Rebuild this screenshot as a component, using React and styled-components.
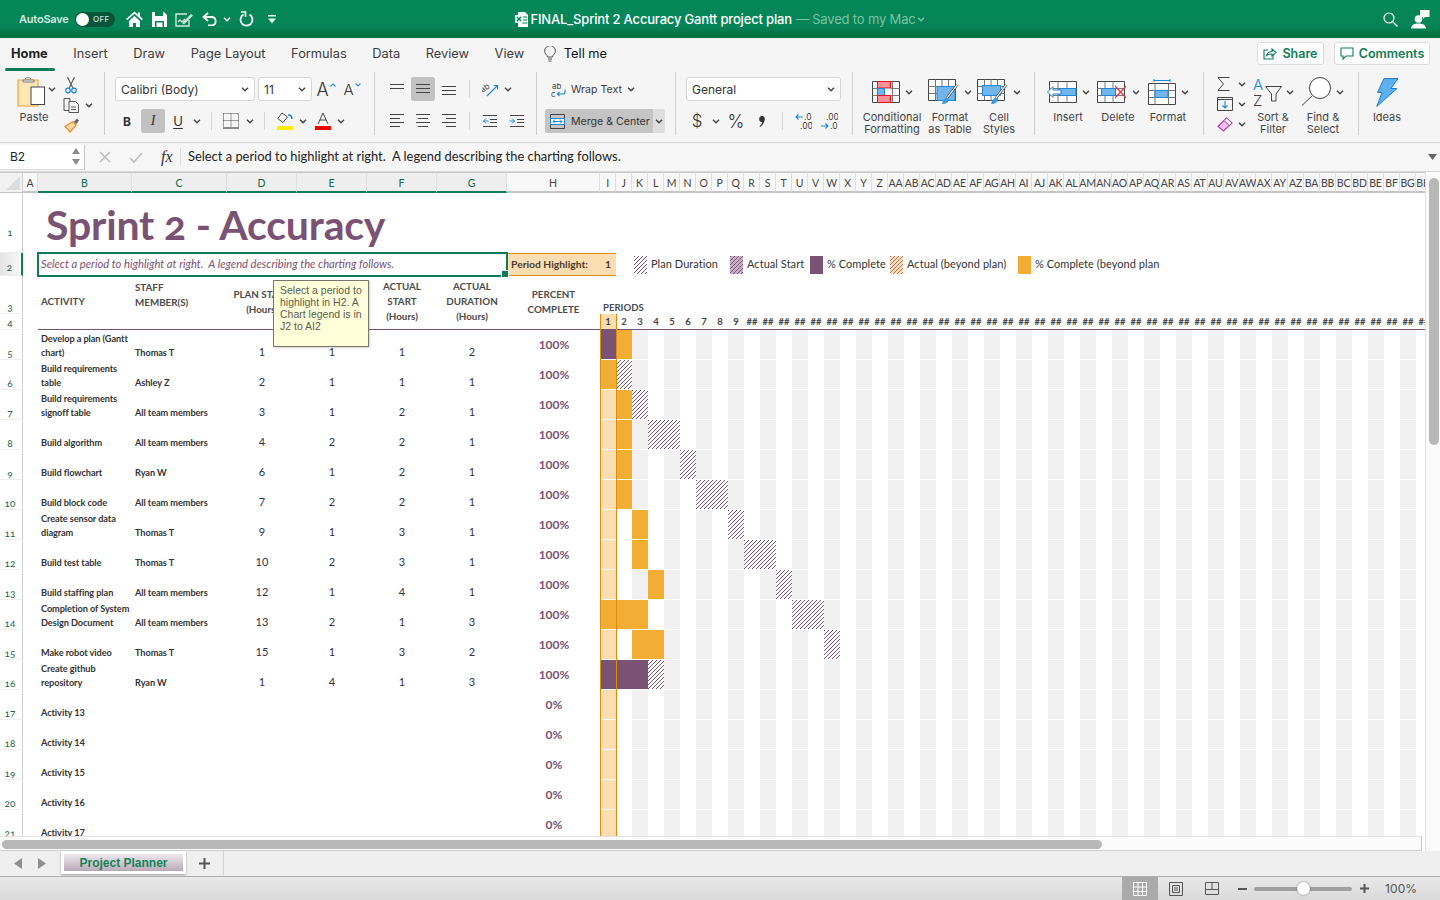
import React from "react";
import styled, { createGlobalStyle, css } from "styled-components";

const PURPLE = "#7a5273";
const ORANGE = "#f1ad34";
const LIGHT = "#fbddb2";
const LINE = "#df8e0b";
const GREEN = "#107c55";
const UI = `Inter, "Liberation Sans", sans-serif`;
const CELL = `Lato, "Open Sans", sans-serif`;

const Global = createGlobalStyle`
  html, body { margin: 0; padding: 0; width: 1440px; height: 900px; overflow: hidden; background: #fff; }
  * { box-sizing: border-box; }
  svg { display: block; flex: none; }
`;

const Page = styled.div`width:1440px;height:900px;display:flex;flex-direction:column;font-family:${UI};overflow:hidden;`;

/* ---------- title bar ---------- */
const TitleBar = styled.header`
  height:38px;flex:none;display:grid;grid-template-columns:1fr auto 1fr;align-items:center;
  background:linear-gradient(#05885a 0%,#058457 70%,#036d3c 100%);color:#fff;
`;
const QuickBar = styled.div`display:flex;align-items:center;padding-left:19px;`;
const AutoSave = styled.span`font-size:11px;font-weight:600;color:#d5ebe0;width:56px;letter-spacing:-.2px;`;
const Toggle = styled.div`
  width:40px;height:15px;border-radius:8px;background:#06553a;display:flex;align-items:center;
  font-size:8px;font-weight:500;color:#cfe6da;gap:4px;letter-spacing:.3px;margin-right:11px;
  &::before{content:"";width:13px;height:13px;border-radius:50%;background:#fff;margin-left:1px;}
`;
const QuickIcon = styled.span`display:flex;align-items:center;justify-content:center;width:${p=>p.$w}px;margin-left:${p=>p.$ml||0}px;`;
const DocTitle = styled.div`display:flex;align-items:center;font-size:13px;font-weight:500;letter-spacing:-.17px;white-space:nowrap;`;
const Saved = styled.span`color:#7dc2a1;margin-left:4px;font-weight:400;`;
const TitleRight = styled.div`display:flex;justify-content:flex-end;align-items:center;gap:13px;padding-right:10px;`;

/* ---------- tabs ---------- */
const TabBar = styled.nav`height:32px;flex:none;background:#f5f5f5;display:flex;align-items:center;padding:0 10px 1px 11px;font-size:12.8px;color:#333;gap:25.6px;`;
const Tab = styled.span`
  position:relative;font-weight:${p=>p.$on?700:400};color:${p=>p.$on?"#222":"#3c3c3c"};
  ${p=>p.$on&&css`&::after{content:"";position:absolute;left:-6px;right:-7px;bottom:-10px;height:3px;background:${GREEN};border-radius:2px;}`}
`;
const TellMe = styled.span`display:flex;align-items:center;gap:8px;color:#111;font-weight:400;margin-left:-6px;`;
const TabSpacer = styled.div`flex:1;`;
const Action = styled.button`
  height:23px;width:${p=>p.$w}px;background:#fff;border:1px solid #dcdcdc;border-radius:3px;color:${GREEN};
  font:600 12.5px ${UI};display:flex;align-items:center;justify-content:center;gap:5px;padding:0;margin-left:${p=>p.$ml||0}px;
`;

/* ---------- ribbon ---------- */
const Ribbon = styled.section`height:73px;flex:none;background:#f5f5f5;border-bottom:1px solid #d4d4d4;display:flex;padding-top:2px;`;
const Group = styled.div`
  width:${p=>p.$w}px;height:63px;flex:none;padding:5px 0 0 ${p=>p.$pl||0}px;
  border-right:${p=>p.$last?"none":"1px solid #cfcfcf"};display:${p=>p.$flex?"flex":"block"};
`;
const ToolRow = styled.div`display:flex;align-items:center;height:24px;margin-bottom:8px;`;
const Tool = styled.span`
  width:${p=>p.$w||24}px;height:24px;margin-left:${p=>p.$ml||0}px;display:flex;align-items:center;justify-content:center;flex:none;
  border-radius:3px;background:${p=>p.$on?"#c1c1c1":"transparent"};color:#333;font-size:${p=>p.$fs||13}px;font-weight:${p=>p.$fw||400};
`;
const Sep = styled.i`display:block;width:1px;height:18px;background:#d6d6d6;margin-left:${p=>p.$ml||0}px;flex:none;`;
const Select = styled.div`
  width:${p=>p.$w}px;height:24px;background:#fff;border:1px solid #d6d6d6;border-radius:3px;margin-left:${p=>p.$ml||0}px;
  display:flex;align-items:center;justify-content:space-between;padding:0 5px;font-size:12px;color:#333;flex:none;
`;
const Bold = styled.b`font:700 12px ${UI};color:#333;`;
const Ital = styled.i`font:italic 14px "Liberation Serif",serif;color:#333;`;
const Under = styled.u`font:400 13px ${UI};color:#333;text-underline-offset:2px;`;
const Grow = styled.span`font:300 ${p=>p.$fs}px ${UI};color:#333;`;
const PasteCol = styled.div`width:${p=>p.$w}px;flex:none;display:flex;flex-direction:column;align-items:center;margin-top:-3px;`;
const PasteArrow = styled.span`width:10px;height:24px;flex:none;margin-left:-6px;display:flex;align-items:center;justify-content:center;`;
const SmallLabel = styled.span`font-size:11px;line-height:12px;color:#444;text-align:center;white-space:pre-line;`;
const WrapRow = styled.div`display:flex;align-items:center;gap:5px;font-size:10.6px;color:#3c3c3c;height:24px;padding-left:${p=>p.$pl||0}px;margin-bottom:8px;`;
const Merge = styled.div`width:120px;height:24px;margin-left:8px;display:flex;border-radius:3px;overflow:hidden;background:#dedede;`;
const MergeMain = styled.div`width:108px;background:#c4c4c4;display:flex;align-items:center;gap:6px;padding-left:5px;font-size:10.6px;color:#333;white-space:nowrap;`;
const MergeArrow = styled.div`flex:1;display:flex;align-items:center;justify-content:center;`;
const BigTool = styled.div`width:${p=>p.$w}px;flex:none;height:58px;display:flex;flex-direction:column;align-items:center;margin-top:-3px;`;
const BigIconRow = styled.div`height:36px;flex:none;display:flex;align-items:center;gap:${p=>p.$gap||5}px;margin-bottom:1px;`;
const EditStack = styled.div`width:${p=>p.$w||44}px;flex:none;padding:0 ${p=>p.$pr||0}px 0 ${p=>p.$pl??13}px;margin-top:${p=>p.$mt??-3}px;display:flex;flex-direction:column;`;
const EditRow = styled.div`height:22px;display:flex;align-items:center;justify-content:space-between;`;
const ClipRow = styled.div`height:22px;display:flex;align-items:center;gap:5px;padding-left:${p=>p.$pl||0}px;`;

/* ---------- formula ---------- */
const FormulaBar = styled.section`height:29px;flex:none;background:#f6f6f6;display:flex;align-items:center;border-bottom:1px solid #d8d8d8;`;
const NameBox = styled.div`width:85px;height:25px;background:#fff;border-right:1px solid #c8c8c8;border-bottom:1px solid #dcdcdc;display:flex;align-items:center;justify-content:space-between;padding:0 4px 0 10px;font-size:12px;color:#222;`;
const FxIcons = styled.div`width:86px;flex:none;display:flex;align-items:center;gap:18px;padding-left:14px;color:#bdbdbd;`;
const FxMark = styled.i`font:italic 16px "Liberation Serif",serif;color:#333;padding-right:7px;border-right:1px solid #ddd;flex:none;`;
const FormulaText = styled.div`flex:1;font:400 12.9px ${CELL};color:#222;padding:0 0 2px 17px;white-space:pre;`;

/* ---------- sheet ---------- */
const SheetArea = styled.main`height:679px;flex:none;display:flex;background:#fff;`;
const SheetMain = styled.div`width:1425px;flex:none;display:flex;flex-direction:column;`;
const SheetClip = styled.div`height:664px;overflow:hidden;position:relative;`;
const Grid = styled.div`
  position:relative;display:grid;
  grid-template-columns:23px 15px 94px 95px 70px 70px 70px 70px 93px repeat(52,16px);
  grid-template-rows:21px 60px 23px 38px 16px repeat(17,30px);
  font-family:${CELL};color:#333;width:1433px;
`;
const Corner = styled.div`background:#f2f2f2;border-right:1px solid #cfcfcf;border-bottom:1px solid #c4c4c4;border-top:1px solid #c8c8c8;position:relative;
  &::after{content:"";position:absolute;right:2px;bottom:2px;border-style:solid;border-width:0 0 14px 14px;border-color:transparent transparent #dcdcdc transparent;}`;
const ColHead = styled.div`
  background:${p=>p.$on?"#eeeeee":"#f8f8f8"};border-top:1px solid #c8c8c8;border-right:1px solid #dedede;
  border-bottom:${p=>p.$on?`2px solid ${GREEN}`:"2px solid #c4c4c4"};padding-top:2px;
  display:flex;align-items:center;justify-content:center;font:400 10.5px ${CELL};color:${p=>p.$on?"#0d6b49":"#444"};
  white-space:nowrap;overflow:visible;letter-spacing:${p=>p.$tight?"-.2px":"0"};
`;
const RowHead = styled.div`
  grid-column:1;border-right:${p=>p.$on?`2px solid ${GREEN}`:"1px solid #cfcfcf"};border-bottom:1px solid #ededed;
  background:${p=>p.$on?"linear-gradient(90deg,#e4e4e4,#f8f8f8)":"#fff"};
  display:flex;align-items:flex-end;justify-content:center;padding-bottom:${p=>p.$pb??0}px;padding-right:2px;
  font:400 10px/12px ${CELL};color:#1d6147;font-variant-numeric:oldstyle-nums;
`;
const TitleCell = styled.div`grid-column:3 / 10;font:700 41px/60px ${CELL};color:${PURPLE};padding:2px 0 0 8px;white-space:nowrap;letter-spacing:-.17px;font-variant-numeric:oldstyle-nums;`;
const Selected = styled.div`
  grid-column:3 / 9;grid-row:3;position:relative;z-index:2;outline:2px solid ${GREEN};outline-offset:-1px;
  font:italic 400 11.2px/21px ${CELL};color:${PURPLE};padding-left:3px;white-space:pre;
  &::after{content:"";position:absolute;right:-2px;bottom:-2px;width:6px;height:6px;background:${GREEN};border:1px solid #fff;}
`;
const HighlightCell = styled.div`
  grid-row:3;grid-column:${p=>p.$col};background:${LIGHT};border-top:1px solid ${LINE};border-bottom:1px solid ${LINE};
  font:700 10.3px/21px ${CELL};color:#4a3c2c;padding-left:${p=>p.$pl||0}px;text-align:${p=>p.$center?"center":"left"};white-space:nowrap;
`;
const LegendItem = styled.div`grid-row:3;grid-column:${p=>p.$col} / span ${p=>p.$span};display:flex;align-items:center;padding:0 0 0 2px;gap:4px;font:400 11px ${CELL};color:#333;white-space:nowrap;overflow:hidden;letter-spacing:.05px;`;
const LegendText = styled.span`margin-top:-2px;`;
const Swatch = styled.span`
  width:13px;height:18px;flex:none;
  ${p=>p.$k==="plan"&&css`background:repeating-linear-gradient(135deg,${PURPLE} 0 1px,#fff 1px 2.83px);`}
  ${p=>p.$k==="start"&&css`background:repeating-linear-gradient(135deg,${PURPLE} 0 1px,#c9b1c5 1px 2.83px);`}
  ${p=>p.$k==="done"&&css`background:${PURPLE};`}
  ${p=>p.$k==="beyond"&&css`background:repeating-linear-gradient(135deg,#a9717a 0 1px,${LIGHT} 1px 2.83px);`}
  ${p=>p.$k==="orange"&&css`background:${ORANGE};`}
`;
const HeadCell = styled.div`
  grid-column:${p=>p.$col};grid-row:4 / 6;border-bottom:1px solid ${PURPLE};
  padding:${p=>p.$top}px 0 0 ${p=>p.$left?3:0}px;
  text-align:${p=>p.$left?"left":"center"};font:700 9.8px/15px ${CELL};color:#4b4b4b;white-space:pre-line;
`;
const Periods = styled.div`grid-column:10 / span 4;grid-row:4;font:700 9.6px/15px ${CELL};color:#4b4b4b;padding:24px 0 0 3px;white-space:nowrap;`;
const PeriodNum = styled.div`
  grid-row:5;border-bottom:1px solid ${PURPLE};background:${p=>p.$on?LIGHT:"#fff"};text-align:center;
  font:700 9.5px/15px ${CELL};color:#444;white-space:nowrap;overflow:hidden;
`;
const ActivityCell = styled.div`grid-column:${p=>p.$col};font:700 9.2px/14px ${CELL};color:#333;padding-left:3px;align-self:end;white-space:pre-line;letter-spacing:-.08px;`;
const NumCell = styled.div`grid-column:${p=>p.$col};font:400 11px/14px ${CELL};color:#2e3148;text-align:center;align-self:end;padding-bottom:1px;`;
const PctCell = styled.div`grid-column:9;font:700 12px/30px ${CELL};color:${PURPLE};text-align:center;padding-left:1px;`;
const GanttCell = styled.div`
  border-bottom:1px solid #fff;background-clip:padding-box;
  ${p=>p.$k==="gray"&&css`background-color:#f1f1f1;`}
  ${p=>p.$k==="light"&&css`background-color:${LIGHT};`}
  ${p=>p.$k==="orange"&&css`background-color:${ORANGE};`}
  ${p=>p.$k==="purple"&&css`background-color:${PURPLE};`}
  ${p=>p.$k==="hatch"&&css`background-image:repeating-linear-gradient(135deg,${PURPLE} 0 1.1px,#fff 1.1px 2.83px);`}
`;
const PeriodMarker = styled.div`position:absolute;left:600px;top:142px;bottom:0;width:17px;border-left:1px solid ${LINE};border-right:1px solid ${LINE};pointer-events:none;z-index:1;`;
const Comment = styled.aside`
  position:absolute;left:273px;top:108px;width:96px;height:67px;z-index:3;background:#ffffd9;border:1px solid #77776a;
  box-shadow:1px 1px 2px rgba(0,0,0,.18);font:400 10.5px/12px "Liberation Sans",sans-serif;color:#5c5c52;padding:3px 2px 0 6px;white-space:pre-line;
`;
const HScroll = styled.div`height:15px;flex:none;background:#fbfbfb;border-top:1px solid #e4e4e4;border-bottom:1px solid #cfcfcf;border-right:1px solid #c8c8c8;padding:3px 0 0 2px;margin-right:3px;`;
const HThumb = styled.div`width:1100px;height:9px;border-radius:5px;background:#b8b8b8;`;
const VScroll = styled.div`width:15px;flex:none;background:#fbfbfb;border-left:1px solid #e2e2e2;padding:6px 0 0 3px;`;
const VThumb = styled.div`width:10px;height:267px;border-radius:5px;background:#b8b8b8;`;

/* ---------- bottom ---------- */
const SheetTabs = styled.footer`height:26px;flex:none;background:#efefef;border-bottom:1px solid #aeaeae;display:flex;align-items:flex-start;`;
const Nav = styled.div`width:61px;height:24px;flex:none;display:flex;align-items:center;gap:16px;padding-left:14px;`;
const SheetTab = styled.div`width:125px;height:23px;flex:none;background:#fff;padding:3px;box-shadow:0 1px 2px rgba(0,0,0,.35);`;
const SheetTabInner = styled.div`height:17px;background:linear-gradient(#efe9ef,#b9a9b8);display:flex;align-items:center;justify-content:center;font:700 12px "Liberation Sans",sans-serif;color:#128355;`;
const AddSheet = styled.div`width:38px;height:24px;flex:none;border-right:1px solid #d4d4d4;display:flex;align-items:center;justify-content:center;`;
const StatusBar = styled.footer`height:23px;flex:none;background:linear-gradient(#e9e9e9,#d9d9d9);display:flex;align-items:center;justify-content:flex-end;`;
const ViewBtn = styled.div`width:${p=>p.$w}px;height:23px;margin-left:${p=>p.$ml||0}px;display:flex;align-items:center;justify-content:center;background:${p=>p.$on?"#aaaaaa":"transparent"};`;
const Slider = styled.div`width:98px;height:4px;background:#a0a0a0;border-radius:2px;position:relative;margin:0 6px 0 6px;
  &::after{content:"";position:absolute;left:43px;top:-5px;width:13px;height:13px;border-radius:50%;background:#fff;box-shadow:0 0 2px rgba(0,0,0,.5);}`;
const Zoomed = styled.span`font-size:12px;color:#555;width:70px;padding-left:15px;letter-spacing:.1px;`;

/* ---------- icons ---------- */
const Chev = ({ c = "#444", s = 8 }) => (
  <svg width={s} height={5} viewBox="0 0 8 5"><path d="M1 .8 4 3.8 7 .8" fill="none" stroke={c} strokeWidth="1.4" /></svg>
);
const ChevTool = ({ w = 12, ml = 0 }) => <Tool $w={w} $ml={ml}><Chev /></Tool>;
const Lines = ({ rows, w = 16, h = 16, c = "#444" }) => (
  <svg width={w} height={h} viewBox={`0 0 ${w} ${h}`}>
    {rows.map(([a, b, y], i) => <path key={i} d={`M${a} ${y+.5}H${b}`} stroke={c} strokeWidth="1" />)}
  </svg>
);
const Home = () => (
  <svg width="17" height="16" viewBox="0 0 17 16" fill="#fff"><path d="M8.5 .5 0 8l1.2 1.3 7.3-6.5 7.3 6.5L17 8 14 5.3V1.5h-2v2zM3 10v6h4v-4h3v4h4v-6L8.5 5z"/></svg>
);
const Save = () => (
  <svg width="15" height="15" viewBox="0 0 15 15"><path d="M0 0h12l3 3v12H0z" fill="#fff"/><path d="M3 0h8v4H3zM3 9h9v6H3z" fill="#058457"/><path d="M4.500 10.500h6v4.500h-6z" fill="#fff"/></svg>
);
const EditDoc = () => (
  <svg width="19" height="15" viewBox="0 0 19 15" fill="none" stroke="#cfe8db" strokeWidth="1.4"><path d="M14 8v6H1V2h11"/><path d="M3 10l2-2 2 2 3-3"/><path d="M8 10l8-8 2 1.500-8 8-2.500 1z" fill="#cfe8db" stroke="none"/></svg>
);
const Undo = () => (
  <svg width="16" height="14" viewBox="0 0 16 14" fill="none" stroke="#fff" strokeWidth="1.8"><path d="M6 1 1.500 5 6 9"/><path d="M2 5h8a4.300 4.300 0 0 1 0 8.500H6"/></svg>
);
const Redo = () => (
  <svg width="15" height="16" viewBox="0 0 15 16" fill="none" stroke="#fff" strokeWidth="1.8"><path d="M4.500 3.500a6 6 0 1 0 6 0"/><path d="M2 1h4.500v5" strokeWidth="1.600"/></svg>
);
const Customize = () => (
  <svg width="8" height="9" viewBox="0 0 8 9" fill="#e8f3ee"><rect width="8" height="1.500"/><path d="M0 3.500h8L4 8.500z"/></svg>
);
const XlsFile = () => (
  <svg width="14" height="15" viewBox="0 0 14 15"><path d="M3 0h7l3 3v12H3z" fill="#fff"/><path d="M7 5h5M7 8h5M7 11h5" stroke="#058457"/><rect y="3" width="8" height="8" fill="#e8f7ef"/><path d="M2 5l4 4M6 5 2 9" stroke="#058457" strokeWidth="1.300"/></svg>
);
const Search = () => (
  <svg width="15" height="15" viewBox="0 0 15 15" fill="none" stroke="#fff" strokeWidth="1.2"><circle cx="6" cy="6" r="5"/><path d="m10 10 4.500 4.500"/></svg>
);
const UserChat = () => (
  <svg width="19" height="19" viewBox="0 0 19 19" fill="#fff"><path d="M9 0h9.500v7H14l-2 2V7H9z"/><circle cx="7.500" cy="9" r="3.800"/><path d="M0 18.500c.5-4 3.500-5 7.500-5s7 1 7.500 5z"/></svg>
);
const Bulb = () => (
  <svg width="12" height="16" viewBox="0 0 12 16" fill="none" stroke="#555" strokeWidth="1"><path d="M3.500 11C3 8.500 .6 7.800.6 5a5.400 5.400 0 0 1 10.800 0c0 2.800-2.400 3.500-2.900 6z"/><path d="M4 13h4M4.500 15h3"/></svg>
);
const ShareIco = () => (
  <svg width="14" height="13" viewBox="0 0 14 13" fill="none" stroke={GREEN} strokeWidth="1.100"><path d="M5 3H1v9h9V8"/><path d="M3.500 8.500C4.500 5.500 7 4.500 9 4.500V2l4 3.500L9 9V7C7 7 5 7.200 3.500 8.500z"/></svg>
);
const CommentIco = () => (
  <svg width="14" height="13" viewBox="0 0 14 13" fill="none" stroke={GREEN} strokeWidth="1.100"><path d="M1 1h12v8H6l-3 3V9H1z"/></svg>
);
const Paste = () => (
  <svg width="34" height="32" viewBox="0 0 34 32"><path d="M1 4h20v26H1z" fill="#fbe6b4" stroke="#f0a93a" strokeWidth="1.200"/><path d="M6 4h11v2H6zM8 3a3.500 2.500 0 0 1 6 0" fill="#fff" stroke="#777" strokeWidth="1"/><rect x="14" y="11" width="13.500" height="17.500" fill="#fff" stroke="#444"/></svg>
);
const Cut = () => (
  <svg width="12" height="17" viewBox="0 0 12 17" fill="none"><path d="M2.500 0 7.800 11M9.500 0 4.200 11" stroke="#555" strokeWidth="1.100"/><circle cx="3" cy="13.500" r="2.300" stroke="#1c86d8" strokeWidth="1.200"/><circle cx="9" cy="13.500" r="2.300" stroke="#1c86d8" strokeWidth="1.200"/></svg>
);
const Copy = () => (
  <svg width="17" height="15" viewBox="0 0 17 15" fill="none" stroke="#444" strokeWidth=".9"><path d="M1 .5h6v12H1z"/><path d="M6 3.500h6.500l3 3v8H6z" fill="#f5f5f5"/><path d="M8 9h5M8 11.500h5"/></svg>
);
const Painter = () => (
  <svg width="16" height="15" viewBox="0 0 16 15"><path d="M1 8.500 9 3.500l3 4-6 6.500z" fill="#fdd9a5" stroke="#f08a1d" strokeWidth="1.200"/><path d="M10 3.500l3-3 2 2-3 4z" fill="#666"/></svg>
);
const Caret = ({ up, c = "#2e8bd6" }) => (
  <svg width="6" height="4" viewBox="0 0 6 4" style={{ marginLeft: 1, marginBottom: 8 }}><path d={up ? "M.5 3.500 3 1l2.500 2.500" : "M.5 .5 3 3 5.500 .5"} fill="none" stroke={c} strokeWidth="1.100"/></svg>
);
const Borders = () => (
  <svg width="16" height="16" viewBox="0 0 16 16" fill="none" stroke="#444" strokeWidth="1" strokeDasharray="1 1"><path d="M.5 .5h15M.5 7.500h15M.5 .5v14M8 .5v14M15.500 .5v14"/><path d="M0 15h16" strokeDasharray="none" stroke="#222"/></svg>
);
const Fill = () => (
  <svg width="17" height="18" viewBox="0 0 17 18"><path d="M5 1 .8 6.500 6 10.500 10.500 5z" fill="#fff" stroke="#444"/><path d="M11 3c3 0 4 2 4 4" fill="none" stroke="#1c86d8" strokeWidth="1.600"/><rect y="14" width="16" height="4" fill="#ffee00"/></svg>
);
const FontColor = () => (
  <svg width="16" height="18" viewBox="0 0 16 18" fill="none"><path d="M3 12 8 1l5 11M5 8h6" stroke="#444" strokeWidth="1"/><rect y="14" width="16" height="4" fill="#f00000"/></svg>
);
const Orient = () => (
  <svg width="17" height="15" viewBox="0 0 17 15"><text x="0" y="9" fontFamily="Inter" fontSize="8" fill="#444" transform="rotate(-35 3 9)">ab</text><path d="M5 14 15 4M11.500 3.500H15.500V7.500" fill="none" stroke="#1c86d8" strokeWidth="1.100"/></svg>
);
const Indent = ({ flip }) => (
  <svg width="15" height="12" viewBox="0 0 15 12" fill="none"><path d={flip ? "M1 .5h14M8 4.500h7M8 7.500h7M1 11.500h14" : "M0 .5h14M7 4.500h7M7 7.500h7M0 11.500h14"} stroke="#444"/><path d={flip ? "M.5 6h5M3 3.500 5.500 6 3 8.500" : "M5.500 6H.5M3 3.500.5 6 3 8.500"} stroke="#1c86d8"/></svg>
);
const WrapIco = () => (
  <svg width="15" height="15" viewBox="0 0 15 15"><text x="1" y="7" fontFamily="Inter" fontSize="8" fill="#444">ab</text><text x="0" y="14.500" fontFamily="Inter" fontSize="8" fill="#444">c</text><path d="M14 7.500v2.500a2 2 0 0 1-2 2H6.500M8.500 10l-2 2 2 2" fill="none" stroke="#1c86d8" strokeWidth="1.100"/></svg>
);
const MergeIco = () => (
  <svg width="15" height="15" viewBox="0 0 15 15" fill="none"><path d="M.5 .5h14v14H.5z" stroke="#444"/><path d="M.5 4.500h14v6H.5z" fill="#fff" stroke="#1c86d8"/><path d="M3 7.500h9M5 5.500l-2 2 2 2M10 5.500l2 2-2 2" stroke="#1c86d8"/></svg>
);
const Comma = () => (
  <svg width="6" height="11" viewBox="0 0 6 11" fill="#333"><path d="M2.800 0a2.700 2.700 0 0 1 3 2.800C5.800 6 4 9 1 11l-.5-.7C2 9 3 7.500 3.200 6 1.500 6.200.2 5 .2 3.200.2 1.200 1.300 0 2.800 0z"/></svg>
);
const Dec = ({ more }) => (
  <svg width="17" height="17" viewBox="0 0 17 17"><text x={more ? 5 : 9} y="7" fontFamily="Inter" fontSize="8.5" fill="#444">{more ? ".00" : ".0"}</text><text x={more ? 9 : 5} y="16" fontFamily="Inter" fontSize="8.5" fill="#444">{more ? ".0" : ".00"}</text><path d={more ? "M0 13h7M4.500 10.500 7 13l-2.500 2.500" : "M8 4H1M3.500 1.500 1 4l2.500 2.500"} fill="none" stroke="#1c86d8" strokeWidth="1.100"/></svg>
);
const TableBase = () => (<><path d="M.5 .5h27v21H.5z" fill="#fff" stroke="#444"/><path d="M.5 7.500h27M.5 14.500h27M7.500 .5v21M14 .5v21M20.500 .5v21" stroke="#777" fill="none"/></>);
const CondFmt = () => (
  <svg width="28" height="22" viewBox="0 0 28 22"><TableBase/><path d="M5.500 .5h13v6.500h-13z" fill="#ff8f97" stroke="#e11" /><path d="M5.500 7.500h13v7h-13z" fill="#fff"/><path d="M5.500 7.500h7v7h-7z" fill="#70b5ec" stroke="#1c86d8"/><path d="M5.500 14.500h13v7h-13z" fill="#ff8f97" stroke="#e11"/></svg>
);
const Brush = () => (<><path d="M29 6 19 19" stroke="#555" strokeWidth="2.600" fill="none"/><path d="M29 6 19 19" stroke="#fff" strokeWidth="1.200" fill="none"/><path d="M14 25c1-4 3-6 5-6.500l2 1.500c0 3-3 5-7 5z" fill="#3f9be4" /></>);
const FmtTable = () => (
  <svg width="31" height="27" viewBox="0 0 31 27"><TableBase/><path d="M9 7.500h18v14H9z" fill="#70b5ec" stroke="#1c86d8"/><Brush/></svg>
);
const CellStyle = () => (
  <svg width="31" height="27" viewBox="0 0 31 27"><TableBase/><path d="M5.500 6.500h18v10h-18z" fill="#70b5ec" stroke="#1c86d8"/><Brush/></svg>
);
const InsertIco = () => (
  <svg width="30" height="22" viewBox="0 0 30 22"><path d="M2.500 .5h27v21h-27z" fill="#fff" stroke="#444"/><path d="M2.500 7.500h27M2.500 14.500h27M11 .5v21M20 .5v21" stroke="#777"/><path d="M12 7.500h17v7H12z" fill="#70b5ec" stroke="#1c86d8"/><path d="M14 9H6V5.500L.5 11 6 16.500V13h8z" fill="#fff" stroke="#1c86d8"/></svg>
);
const DeleteIco = () => (
  <svg width="30" height="22" viewBox="0 0 30 22"><path d="M.5 .5h27v21H.5z" fill="#fff" stroke="#444"/><path d="M.5 7.500h27M.5 14.500h27M8 .5v21M16 .5v21" stroke="#777"/><path d="M4.500 7.500h14v7h-14z" fill="#70b5ec" stroke="#1c86d8"/><path d="M18 5l11 12M29 5 18 17" stroke="#f0303a" strokeWidth="1.200"/></svg>
);
const FormatIco = () => (
  <svg width="28" height="26" viewBox="0 0 28 26"><path d="M6 1.500h16M6 0v3M22 0v3" stroke="#1c86d8" fill="none"/><path d="M.5 4.500h27v21H.5z" fill="#fff" stroke="#444"/><path d="M.5 11.500h27M.5 18.500h27M7 4.500v21M20.500 4.500v21" stroke="#777"/><path d="M7 11.500h13v7H7z" fill="#70b5ec" stroke="#1c86d8"/></svg>
);
const Sigma = () => (
  <svg width="13" height="14" viewBox="0 0 13 14" fill="none" stroke="#444"><path d="M12.500 .5H1l5.500 6.500L1 13.500h11.500"/></svg>
);
const FillDown = () => (
  <svg width="16" height="14" viewBox="0 0 16 14" fill="none"><path d="M.5 .5h15v13H.5z" stroke="#444"/><path d="M.5 2.500h15" stroke="#444"/><path d="M8 4v7M5.500 8.500 8 11l2.500-2.500" stroke="#1c86d8" strokeWidth="1.100"/></svg>
);
const Eraser = () => (
  <svg width="16" height="15" viewBox="0 0 16 15"><path d="M1 9.500 9.500 1l5.500 5-8.500 8z" fill="#f0c4ec" stroke="#b93bb0" strokeWidth="1.200"/><path d="M7 3.500l5.500 5 2.500-2.500-5.500-5z" fill="#fff" stroke="#b93bb0"/></svg>
);
const SortIco = () => (
  <svg width="29" height="28" viewBox="0 0 29 28" fill="none"><text x="0" y="12" fontFamily="Inter" fontSize="15" fontWeight="300" fill="#1c86d8">A</text><text x="0" y="27.500" fontFamily="Inter" fontSize="15" fontWeight="300" fill="#444">Z</text><path d="M12.500 8.500h16L23 16v7l-4.500 0v-7z" stroke="#444"/></svg>
);
const FindIco = () => (
  <svg width="30" height="30" viewBox="0 0 30 30" fill="none" stroke="#444"><circle cx="18" cy="11" r="10.500" fill="#fff"/><path d="m10 19-10 9.500"/></svg>
);
const Bolt = () => (
  <svg width="23" height="29" viewBox="0 0 23 29"><path d="M8 .5h14L15 10.500h6L.8 28.500 6 14.500H1.500z" fill="#5fb0ee" stroke="#1c7fd0"/></svg>
);
const Stepper = () => (
  <svg width="8" height="17" viewBox="0 0 8 17" fill="#8b8b8b"><path d="M4 0 8 6H0zM4 17 0 11h8z"/></svg>
);
const Tri = ({ left }) => (
  <svg width="8" height="11" viewBox="0 0 8 11" fill="#8f8f8f"><path d={left ? "M8 0v11L0 5.500z" : "M0 0v11l8-5.500z"}/></svg>
);
const Plus = ({ s = 11, c = "#555", w = 2 }) => (
  <svg width={s} height={s} viewBox={`0 0 ${s} ${s}`} stroke={c} strokeWidth={w}><path d={`M0 ${s/2}H${s}M${s/2} 0V${s}`}/></svg>
);
const Minus = () => (
  <svg width="9" height="2" viewBox="0 0 9 2"><rect width="9" height="2" fill="#555"/></svg>
);
const NormalView = () => (
  <svg width="14" height="14" viewBox="0 0 14 14" fill="none" stroke="#fff" strokeWidth="1"><path d="M.5 .5h13v13H.5zM.5 5h13M.5 9.500h13M5 .5v13M9.500 .5v13"/></svg>
);
const LayoutView = () => (
  <svg width="14" height="14" viewBox="0 0 14 14" fill="none" stroke="#555"><path d="M.5 .5h13v13H.5z"/><path d="M3.500 3.500h7v7h-7zM5 6h4M5 8h4"/></svg>
);
const BreakView = () => (
  <svg width="14" height="13" viewBox="0 0 14 13" fill="none" stroke="#555"><path d="M.5 .5h13v12H.5zM7 .5v7H.5M7 7.500h6.500"/></svg>
);

/* ---------- data ---------- */
const letters = (() => {
  const base = "ABCDEFGHIJKLMNOPQRSTUVWXYZ".split("");
  return base.slice(8).concat(base.map(l => "A" + l), base.slice(0, 8).map(l => "B" + l));
})();

const tasks = [
  ["Develop a plan (Gantt\nchart)", "Thomas T", 1, 1, 1, 2, { 0: "purple", 1: "orange" }],
  ["Build requirements\ntable", "Ashley Z", 2, 1, 1, 1, { 0: "orange", 1: "hatch" }],
  ["Build requirements\nsignoff table", "All team members", 3, 1, 2, 1, { 1: "orange", 2: "hatch" }],
  ["Build algorithm", "All team members", 4, 2, 2, 1, { 1: "orange", 3: "hatch", 4: "hatch" }],
  ["Build flowchart", "Ryan W", 6, 1, 2, 1, { 1: "orange", 5: "hatch" }],
  ["Build block code", "All team members", 7, 2, 2, 1, { 1: "orange", 6: "hatch", 7: "hatch" }],
  ["Create sensor data\ndiagram", "Thomas T", 9, 1, 3, 1, { 2: "orange", 8: "hatch" }],
  ["Build test table", "Thomas T", 10, 2, 3, 1, { 2: "orange", 9: "hatch", 10: "hatch" }],
  ["Build staffing plan", "All team members", 12, 1, 4, 1, { 3: "orange", 11: "hatch" }],
  ["Completion of System\nDesign Document", "All team members", 13, 2, 1, 3, { 0: "orange", 1: "orange", 2: "orange", 12: "hatch", 13: "hatch" }],
  ["Make robot video", "Thomas T", 15, 1, 3, 2, { 2: "orange", 3: "orange", 14: "hatch" }],
  ["Create github\nrepository", "Ryan W", 1, 4, 1, 3, { 0: "purple", 1: "purple", 2: "purple", 3: "hatch" }],
  ["Activity 13", "", "", "", "", "", {}],
  ["Activity 14", "", "", "", "", "", {}],
  ["Activity 15", "", "", "", "", "", {}],
  ["Activity 16", "", "", "", "", "", {}],
  ["Activity 17", "", "", "", "", "", {}],
];

const cellKind = (i, bars) => bars[i] || (i === 0 ? "light" : i % 2 === 0 ? "gray" : "none");

const SheetRow = ({ t, n }) => (
  <>
    <RowHead>{n}</RowHead>
    <ActivityCell $col={3}>{t[0]}</ActivityCell>
    <ActivityCell $col={4}>{t[1]}</ActivityCell>
    <NumCell $col={5}>{t[2]}</NumCell>
    <NumCell $col={6}>{t[3]}</NumCell>
    <NumCell $col={7}>{t[4]}</NumCell>
    <NumCell $col={8}>{t[5]}</NumCell>
    <PctCell>{n <= 16 ? "100%" : "0%"}</PctCell>
    {letters.map((_, i) => <GanttCell key={i} $k={cellKind(i, t[6])} />)}
  </>
);

export default function App() {
  return (
    <Page>
      <Global />
      <TitleBar>
        <QuickBar>
          <AutoSave>AutoSave</AutoSave>
          <Toggle>OFF</Toggle>
          <QuickIcon $w={17}><Home /></QuickIcon>
          <QuickIcon $w={15} $ml={9}><Save /></QuickIcon>
          <QuickIcon $w={34}><EditDoc /></QuickIcon>
          <QuickIcon $w={18}><Undo /></QuickIcon>
          <QuickIcon $w={16}><Chev c="#fff" /></QuickIcon>
          <QuickIcon $w={22}><Redo /></QuickIcon>
          <QuickIcon $w={30}><Customize /></QuickIcon>
        </QuickBar>
        <DocTitle>
          <QuickIcon $w={17}><XlsFile /></QuickIcon>
          FINAL_Sprint 2 Accuracy Gantt project plan
          <Saved>— Saved to my Mac</Saved>
          <QuickIcon $w={11}><Chev c="#7dc2a1" /></QuickIcon>
        </DocTitle>
        <TitleRight><Search /><UserChat /></TitleRight>
      </TitleBar>

      <TabBar>
        <Tab $on>Home</Tab>
        <Tab>Insert</Tab>
        <Tab>Draw</Tab>
        <Tab>Page Layout</Tab>
        <Tab>Formulas</Tab>
        <Tab>Data</Tab>
        <Tab>Review</Tab>
        <Tab>View</Tab>
        <TellMe><Bulb />Tell me</TellMe>
        <TabSpacer />
        <Action $w={67}><ShareIco />Share</Action>
        <Action $w={96} $ml={-15.6}><CommentIco />Comments</Action>
      </TabBar>

      <Ribbon>
        <Group $w={105} $flex $pl={15}>
          <PasteCol $w={38}>
            <BigIconRow $gap={2}><Paste /></BigIconRow>
            <SmallLabel>Paste</SmallLabel>
          </PasteCol>
          <PasteArrow><Chev /></PasteArrow>
          <EditStack $w={36} $pl={6} $mt={-2}>
            <ClipRow $pl={2}><Cut /></ClipRow>
            <ClipRow><Copy /><Chev /></ClipRow>
            <ClipRow $pl={1}><Painter /></ClipRow>
          </EditStack>
        </Group>

        <Group $w={270} $pl={10}>
          <ToolRow>
            <Select $w={140}>Calibri (Body)<Chev /></Select>
            <Select $w={54} $ml={3}>11<Chev /></Select>
            <Tool $w={24} $ml={2}><Grow $fs={18}>A</Grow><Caret up /></Tool>
            <Tool $w={24} $ml={2}><Grow $fs={15}>A</Grow><Caret /></Tool>
          </ToolRow>
          <ToolRow>
            <Tool $w={24}><Bold>B</Bold></Tool>
            <Tool $w={24} $ml={2} $on><Ital>I</Ital></Tool>
            <Tool $w={24} $ml={1}><Under>U</Under></Tool>
            <ChevTool w={14} />
            <Sep $ml={7} />
            <Tool $w={26} $ml={6}><Borders /></Tool>
            <ChevTool />
            <Sep $ml={8} />
            <Tool $w={24} $ml={8}><Fill /></Tool>
            <ChevTool />
            <Tool $w={24} $ml={2}><FontColor /></Tool>
            <ChevTool />
          </ToolRow>
        </Group>

        <Group $w={162} $pl={9}>
          <ToolRow>
            <Tool $w={26}><Lines rows={[[1,15,1],[1,15,5]]} h={12} /></Tool>
            <Tool $w={24} $ml={1} $on><Lines rows={[[1,15,1],[1,15,5],[1,15,9]]} h={12} /></Tool>
            <Tool $w={26} $ml={1}><Lines rows={[[1,15,4],[1,15,8],[1,15,12]]} h={14} /></Tool>
            <Sep $ml={7} />
            <Tool $w={26} $ml={7}><Orient /></Tool>
            <ChevTool w={10} />
          </ToolRow>
          <ToolRow>
            <Tool $w={26}><Lines rows={[[1,15,1],[1,11,5],[1,15,9],[1,11,13]]} /></Tool>
            <Tool $w={26}><Lines rows={[[1,15,1],[3,13,5],[1,15,9],[3,13,13]]} /></Tool>
            <Tool $w={26}><Lines rows={[[1,15,1],[5,15,5],[1,15,9],[5,15,13]]} /></Tool>
            <Sep $ml={7} />
            <Tool $w={26} $ml={7}><Indent /></Tool>
            <Tool $w={26}><Indent flip /></Tool>
          </ToolRow>
        </Group>

        <Group $w={139}>
          <WrapRow $pl={14}><WrapIco />Wrap Text <Chev /></WrapRow>
          <Merge>
            <MergeMain><MergeIco />Merge &amp; Center</MergeMain>
            <MergeArrow><Chev /></MergeArrow>
          </Merge>
        </Group>

        <Group $w={177} $pl={10}>
          <ToolRow><Select $w={155}>General<Chev /></Select></ToolRow>
          <ToolRow>
            <Tool $w={22} $fs={17} $fw={300}>$</Tool>
            <ChevTool w={16} />
            <Tool $w={24} $fs={18} $fw={300}>%</Tool>
            <Tool $w={28}><Comma /></Tool>
            <Sep $ml={6} />
            <Tool $w={26} $ml={7}><Dec /></Tool>
            <Tool $w={26}><Dec more /></Tool>
          </ToolRow>
        </Group>

        <Group $w={182} $flex $pl={9}>
          <BigTool $w={60}><BigIconRow><CondFmt /><Chev /></BigIconRow><SmallLabel>{"Conditional\nFormatting"}</SmallLabel></BigTool>
          <BigTool $w={56}><BigIconRow><FmtTable /><Chev /></BigIconRow><SmallLabel>{"Format\nas Table"}</SmallLabel></BigTool>
          <BigTool $w={42}><BigIconRow><CellStyle /><Chev /></BigIconRow><SmallLabel>{"Cell\nStyles"}</SmallLabel></BigTool>
        </Group>

        <Group $w={169} $flex $pl={8}>
          <BigTool $w={50}><BigIconRow><InsertIco /><Chev /></BigIconRow><SmallLabel>Insert</SmallLabel></BigTool>
          <BigTool $w={50}><BigIconRow><DeleteIco /><Chev /></BigIconRow><SmallLabel>Delete</SmallLabel></BigTool>
          <BigTool $w={50}><BigIconRow><FormatIco /><Chev /></BigIconRow><SmallLabel>Format</SmallLabel></BigTool>
        </Group>

        <Group $w={155} $flex>
          <EditStack $pr={2}>
            <EditRow><Sigma /><Chev /></EditRow>
            <EditRow><FillDown /><Chev /></EditRow>
            <EditRow><Eraser /><Chev /></EditRow>
          </EditStack>
          <BigTool $w={50}><BigIconRow $gap={4}><SortIco /><Chev /></BigIconRow><SmallLabel>{"Sort &\nFilter"}</SmallLabel></BigTool>
          <BigTool $w={50}><BigIconRow $gap={4}><FindIco /><Chev /></BigIconRow><SmallLabel>{"Find &\nSelect"}</SmallLabel></BigTool>
        </Group>

        <Group $w={56} $flex $last>
          <BigTool $w={56}><BigIconRow><Bolt /></BigIconRow><SmallLabel>Ideas</SmallLabel></BigTool>
        </Group>
      </Ribbon>

      <FormulaBar>
        <NameBox>B2<Stepper /></NameBox>
        <FxIcons>
          <svg width="12" height="12" viewBox="0 0 12 12" stroke="#bdbdbd" strokeWidth="1.600" fill="none"><path d="m1 1 10 10M11 1 1 11"/></svg>
          <svg width="14" height="11" viewBox="0 0 14 11" stroke="#bdbdbd" strokeWidth="1.600" fill="none"><path d="m1 6 4 4 8-9"/></svg>
          <FxMark>fx</FxMark>
        </FxIcons>
        <FormulaText>Select a period to highlight at right.  A legend describing the charting follows.</FormulaText>
        <svg width="9" height="6" viewBox="0 0 9 6" fill="#666" style={{ marginRight: 3 }}><path d="M0 0h9L4.500 6z"/></svg>
      </FormulaBar>

      <SheetArea>
        <SheetMain>
          <SheetClip>
            <Grid>
              <Corner />
              <ColHead>A</ColHead>
              {["B","C","D","E","F","G"].map(l => <ColHead key={l} $on>{l}</ColHead>)}
              <ColHead>H</ColHead>
              {letters.map(l => <ColHead key={l} $tight>{l}</ColHead>)}

              <RowHead $pb={14}>1</RowHead>
              <TitleCell>Sprint 2 - Accuracy</TitleCell>

              <RowHead $on style={{ gridRow: 3 }} $pb={2}>2</RowHead>
              <Selected>Select a period to highlight at right.  A legend describing the charting follows.</Selected>
              <HighlightCell $col={9} $pl={4}>Period Highlight:</HighlightCell>
              <HighlightCell $col={10} $center>1</HighlightCell>
              <LegendItem $col={12} $span={6}><Swatch $k="plan" /><LegendText>Plan Duration</LegendText></LegendItem>
              <LegendItem $col={18} $span={5}><Swatch $k="start" /><LegendText>Actual Start</LegendText></LegendItem>
              <LegendItem $col={23} $span={5}><Swatch $k="done" /><LegendText>% Complete</LegendText></LegendItem>
              <LegendItem $col={28} $span={8}><Swatch $k="beyond" /><LegendText>Actual (beyond plan)</LegendText></LegendItem>
              <LegendItem $col={36} $span={9}><Swatch $k="orange" /><LegendText>% Complete (beyond plan</LegendText></LegendItem>

              <RowHead style={{ gridRow: 4 }}>3</RowHead>
              <RowHead style={{ gridRow: 5 }}>4</RowHead>
              <HeadCell $col={3} $left $top={18}>ACTIVITY</HeadCell>
              <HeadCell $col={4} $left $top={4}>{"STAFF\nMEMBER(S)"}</HeadCell>
              <HeadCell $col={5} $top={11}>{"PLAN START\n(Hours)"}</HeadCell>
              <HeadCell $col={6} $top={11} />
              <HeadCell $col={7} $top={3}>{"ACTUAL\nSTART\n(Hours)"}</HeadCell>
              <HeadCell $col={8} $top={3}>{"ACTUAL\nDURATION\n(Hours)"}</HeadCell>
              <HeadCell $col={9} $top={11}>{"PERCENT\nCOMPLETE"}</HeadCell>
              <Periods>PERIODS</Periods>
              {letters.map((l, i) => (
                <PeriodNum key={l} $on={i === 0} style={{ gridColumn: i + 10 }}>{i < 9 ? i + 1 : "##"}</PeriodNum>
              ))}

              {tasks.map((t, i) => <SheetRow key={i} t={t} n={i + 5} />)}

              <PeriodMarker />
              <Comment>{"Select a period to\nhighlight in H2. A\nChart legend is in\nJ2 to AI2"}</Comment>
            </Grid>
          </SheetClip>
          <HScroll><HThumb /></HScroll>
        </SheetMain>
        <VScroll><VThumb /></VScroll>
      </SheetArea>

      <SheetTabs>
        <Nav><Tri left /><Tri /></Nav>
        <SheetTab><SheetTabInner>Project Planner</SheetTabInner></SheetTab>
        <AddSheet><Plus /></AddSheet>
      </SheetTabs>

      <StatusBar>
        <ViewBtn $w={36} $on><NormalView /></ViewBtn>
        <ViewBtn $w={36}><LayoutView /></ViewBtn>
        <ViewBtn $w={36}><BreakView /></ViewBtn>
        <ViewBtn $w={12} $ml={6}><Minus /></ViewBtn>
        <Slider />
        <ViewBtn $w={12}><Plus s={9} /></ViewBtn>
        <Zoomed>100%</Zoomed>
      </StatusBar>
    </Page>
  );
}
